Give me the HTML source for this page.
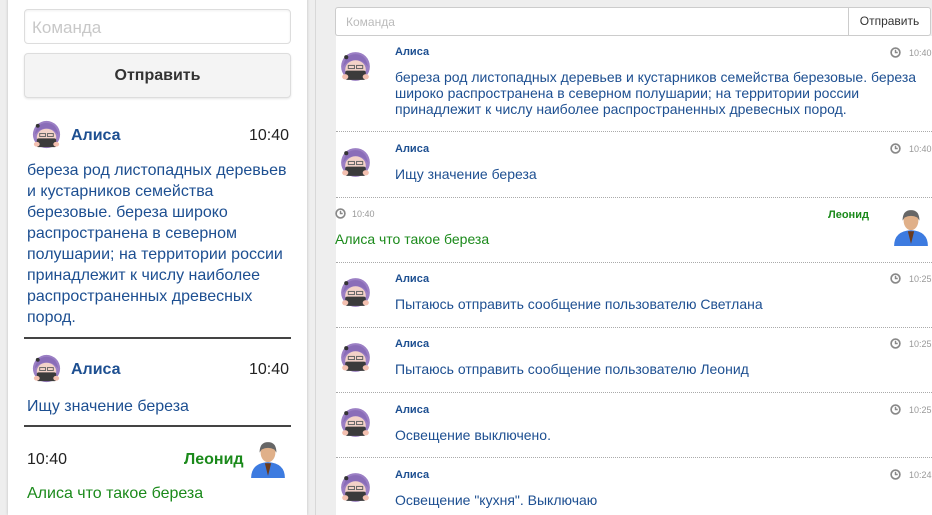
<!DOCTYPE html>
<html style="height:515px;overflow:hidden"><head><meta charset="utf-8"><style>
*{box-sizing:border-box;margin:0;padding:0}
body{width:932px;height:515px;overflow:hidden;background:#eeeeee;font-family:"Liberation Sans",Arial,sans-serif;position:relative}
.left{position:absolute;left:8px;top:-2px;width:299px;height:517px;background:#fff;box-shadow:0 0 3px rgba(0,0,0,.2)}
.inp{position:absolute;left:24px;top:9px;width:267px;height:35px;border:1px solid #ddd;border-radius:4px;font-size:17px;color:#c8c8c8;padding:8px 7px;box-shadow:inset 0 1px 2px rgba(0,0,0,.06)}
.btn{position:absolute;left:24px;top:53px;width:267px;height:45px;border:1px solid #ddd;border-radius:4px;background:#f4f4f4;font-size:16px;font-weight:bold;color:#333;text-align:center;line-height:43px;box-shadow:0 1px 2px rgba(0,0,0,.1)}
.ab{position:absolute}
.lname{font-size:16px;font-weight:bold;color:#1d4f91}
.ltime{font-size:16px;color:#222}
.ltext{font-size:16px;color:#1d4f91;line-height:21px}
.hr{position:absolute;left:24px;width:267px;height:2px;background:#444}
.rline{position:absolute;left:315px;top:0;width:1px;height:515px;background:#d8d8d8}
.right{position:absolute;left:336px;top:36px;width:596px;height:479px;background:#fff}
.rinp{position:absolute;left:335px;top:7px;width:514px;height:29px;border:1px solid #ccc;border-radius:3px 0 0 3px;background:#fff;font-size:12px;color:#bbb;padding:7px 10px}
.rbtn{position:absolute;left:848px;top:7px;width:83px;height:29px;border:1px solid #ccc;border-radius:0 3px 3px 0;background:#fff;font-size:12px;color:#333;text-align:center;line-height:27px}
.rname{font-size:11px;font-weight:bold;color:#1d4f91}
.rtext{font-size:14px;color:#1d4f91;line-height:16px}
.rtime{font-size:9px;color:#999}
.sep{position:absolute;left:336px;width:596px;border-top:1px dotted #aaa}
</style></head><body>
<svg width="0" height="0" style="position:absolute">
<defs>
<symbol id="al" viewBox="0 0 36 36">
<circle cx="18" cy="17" r="14" fill="#9b7fc4"/>
<ellipse cx="18" cy="20" rx="10" ry="9" fill="#f3d2c8"/>
<path d="M6 17 Q8 5 18 5 Q28 5 30 17 L27 14 Q20 8 10 13Z" fill="#8a6db8"/>
<circle cx="9" cy="8" r="2" fill="#333"/>
<rect x="11" y="16" width="6" height="3" fill="none" stroke="#666" stroke-width="1"/>
<rect x="19" y="16" width="6" height="3" fill="none" stroke="#666" stroke-width="1"/>
<rect x="8" y="21" width="20" height="9" rx="2" fill="#3b3b3b"/>
<ellipse cx="8" cy="27" rx="3" ry="2.5" fill="#f3c0b0"/>
<ellipse cx="28" cy="27" rx="3" ry="2.5" fill="#f3c0b0"/>
</symbol>
<symbol id="le" viewBox="0 0 36 36">
<path d="M2 36 Q2 22 18 21 Q34 22 34 36Z" fill="#3d7be0"/>
<path d="M15 22 L18 34 L21 22Z" fill="#6b3b1d"/>
<ellipse cx="18" cy="12" rx="7" ry="9" fill="#e0b089"/>
<path d="M10 12 Q10 2 18 2 Q26 2 26 12 L24 9 Q18 6 12 9Z" fill="#666"/>
</symbol>
<symbol id="clk" viewBox="0 0 10 10"><circle cx="5" cy="5" r="4" fill="none" stroke="#888" stroke-width="1.5"/><path d="M5 2.5V5H7" fill="none" stroke="#888" stroke-width="1.3"/></symbol>
</defs></svg>

<div class="left"></div>
<div class="inp">Команда</div>
<div class="btn">Отправить</div>

<svg class="ab" style="left:29px;top:118px" width="35" height="35"><use href="#al"/></svg>
<div class="ab lname" style="left:71px;top:127px">Алиса</div>
<div class="ab ltime" style="left:249px;top:127px">10:40</div>
<div class="ab ltext" style="left:27px;top:160px;width:262px">береза род листопадных деревьев и кустарников семейства березовые. береза широко распространена в северном полушарии; на территории россии принадлежит к числу наиболее распространенных древесных пород.</div>
<div class="hr" style="top:337px"></div>

<svg class="ab" style="left:29px;top:352px" width="35" height="35"><use href="#al"/></svg>
<div class="ab lname" style="left:71px;top:361px">Алиса</div>
<div class="ab ltime" style="left:249px;top:361px">10:40</div>
<div class="ab ltext" style="left:27px;top:396px">Ищу значение береза</div>
<div class="hr" style="top:425px"></div>

<div class="ab ltime" style="left:27px;top:451px">10:40</div>
<div class="ab lname" style="left:184px;top:451px;color:#1b8a1b">Леонид</div>
<svg class="ab" style="left:249px;top:438px" width="38" height="42"><use href="#le"/></svg>
<div class="ab ltext" style="left:27px;top:483px;color:#1b8a1b">Алиса что такое береза</div>

<div class="rline"></div>
<div class="right"></div>
<div class="rinp">Команда</div>
<div class="rbtn">Отправить</div>

<svg class="ab" style="left:337px;top:49px" width="37" height="37"><use href="#al"/></svg>
<div class="ab rname" style="left:395px;top:46px">Алиса</div>
<svg class="ab" style="left:890px;top:47px" width="11" height="11"><use href="#clk"/></svg>
<div class="ab rtime" style="left:909px;top:48px">10:40</div>
<div class="ab rtext" style="left:395px;top:69px;width:535px">береза род листопадных деревьев и кустарников семейства березовые. береза широко распространена в северном полушарии; на территории россии принадлежит к числу наиболее распространенных древесных пород.</div>
<div class="sep" style="top:131px"></div>

<svg class="ab" style="left:337px;top:145px" width="37" height="37"><use href="#al"/></svg>
<div class="ab rname" style="left:395px;top:143px">Алиса</div>
<svg class="ab" style="left:890px;top:143px" width="11" height="11"><use href="#clk"/></svg>
<div class="ab rtime" style="left:909px;top:144px">10:40</div>
<div class="ab rtext" style="left:395px;top:166px">Ищу значение береза</div>
<div class="sep" style="top:197px"></div>

<svg class="ab" style="left:335px;top:208px" width="11" height="11"><use href="#clk"/></svg>
<div class="ab rtime" style="left:352px;top:209px">10:40</div>
<div class="ab rname" style="left:828px;top:209px;color:#1b8a1b">Леонид</div>
<svg class="ab" style="left:892px;top:207px" width="38" height="40"><use href="#le"/></svg>
<div class="ab rtext" style="left:335px;top:231px;color:#1b8a1b">Алиса что такое береза</div>
<div class="sep" style="top:262px"></div>

<svg class="ab" style="left:337px;top:275px" width="37" height="37"><use href="#al"/></svg>
<div class="ab rname" style="left:395px;top:273px">Алиса</div>
<svg class="ab" style="left:890px;top:273px" width="11" height="11"><use href="#clk"/></svg>
<div class="ab rtime" style="left:909px;top:274px">10:25</div>
<div class="ab rtext" style="left:395px;top:296px">Пытаюсь отправить сообщение пользователю Светлана</div>
<div class="sep" style="top:327px"></div>

<svg class="ab" style="left:337px;top:340px" width="37" height="37"><use href="#al"/></svg>
<div class="ab rname" style="left:395px;top:338px">Алиса</div>
<svg class="ab" style="left:890px;top:338px" width="11" height="11"><use href="#clk"/></svg>
<div class="ab rtime" style="left:909px;top:339px">10:25</div>
<div class="ab rtext" style="left:395px;top:361px">Пытаюсь отправить сообщение пользователю Леонид</div>
<div class="sep" style="top:392px"></div>

<svg class="ab" style="left:337px;top:405px" width="37" height="37"><use href="#al"/></svg>
<div class="ab rname" style="left:395px;top:404px">Алиса</div>
<svg class="ab" style="left:890px;top:404px" width="11" height="11"><use href="#clk"/></svg>
<div class="ab rtime" style="left:909px;top:405px">10:25</div>
<div class="ab rtext" style="left:395px;top:427px">Освещение выключено.</div>
<div class="sep" style="top:457px"></div>

<svg class="ab" style="left:337px;top:470px" width="37" height="37"><use href="#al"/></svg>
<div class="ab rname" style="left:395px;top:469px">Алиса</div>
<svg class="ab" style="left:890px;top:469px" width="11" height="11"><use href="#clk"/></svg>
<div class="ab rtime" style="left:909px;top:470px">10:24</div>
<div class="ab rtext" style="left:395px;top:492px">Освещение "кухня". Выключаю</div>
</body></html>
